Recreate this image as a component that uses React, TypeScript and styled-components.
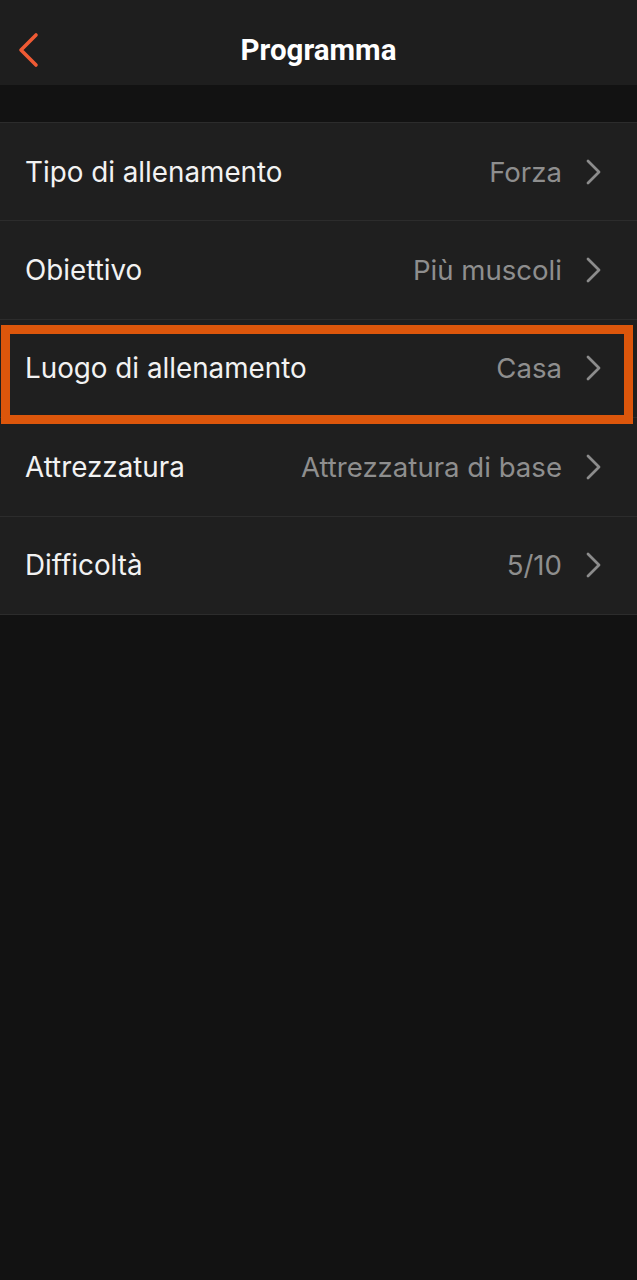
import styled, { createGlobalStyle } from 'styled-components';

const GlobalStyle = createGlobalStyle`
  html, body {
    margin: 0;
    padding: 0;
    background: #121212;
  }
  #root {
    min-height: 100vh;
  }
`;

const ROWS = [
  { label: 'Tipo di allenamento', value: 'Forza' },
  { label: 'Obiettivo', value: 'Più muscoli' },
  { label: 'Luogo di allenamento', value: 'Casa', highlighted: true },
  { label: 'Attrezzatura', value: 'Attrezzatura di base' },
  { label: 'Difficoltà', value: '5/10' },
];

export default function App() {
  return (
    <Screen>
      <GlobalStyle />
      <Header>
        <BackButton aria-label="Indietro">
          <svg width="22" height="36" viewBox="0 0 22 36" fill="none">
            <path
              d="M18 3 L3 18 L18 33"
              stroke="#ef5a34"
              strokeWidth="3.6"
              strokeLinecap="round"
              strokeLinejoin="round"
            />
          </svg>
        </BackButton>
        <Title>Programma</Title>
      </Header>

      <List>
        {ROWS.map((row) => (
          <Row key={row.label}>
            <Label>{row.label}</Label>
            <Value>{row.value}</Value>
            <Chevron width="15" height="26" viewBox="0 0 15 26" fill="none">
              <path
                d="M2 2 L13 13 L2 24"
                stroke="#8c8c8c"
                strokeWidth="2.8"
                strokeLinecap="round"
                strokeLinejoin="round"
              />
            </Chevron>
            {row.highlighted && <Highlight />}
          </Row>
        ))}
      </List>
    </Screen>
  );
}

const Screen = styled.div`
  display: flex;
  flex-direction: column;
  width: 100%;
  min-height: 100vh;
  background: #121212;
  font-family: Inter, 'Noto Sans', sans-serif;
`;

const Header = styled.header`
  position: relative;
  display: flex;
  align-items: center;
  justify-content: center;
  box-sizing: border-box;
  height: 85px;
  padding-top: 14px;
  background: #1e1e1e;
`;

const BackButton = styled.button`
  position: absolute;
  left: 18px;
  top: 32px;
  display: flex;
  padding: 0;
  border: none;
  background: transparent;
`;

const Title = styled.h1`
  margin: 0;
  color: #ffffff;
  font-family: Roboto, 'Liberation Sans', sans-serif;
  font-size: 29.5px;
  font-weight: 700;
`;

const List = styled.div`
  display: flex;
  flex-direction: column;
  margin-top: 37px;
  border-bottom: 1px solid #2c2c2c;
`;

const Row = styled.div`
  position: relative;
  display: flex;
  align-items: center;
  box-sizing: border-box;
  height: 98.4px;
  padding: 0 36px 0 25px;
  background: #1f1f1f;
  border-top: 1px solid #2c2c2c;
`;

const Label = styled.span`
  flex: 1;
  color: #f2f2f2;
  font-size: 27.8px;
  font-weight: 400;
`;

const Value = styled.span`
  color: #8e8e8e;
  font-size: 27.6px;
  font-weight: 400;
  margin-right: 24px;
`;

const Chevron = styled.svg`
  flex-shrink: 0;
`;

const Highlight = styled.div`
  position: absolute;
  z-index: 1;
  left: 1px;
  right: 4px;
  top: 5px;
  bottom: -7px;
  border: 9px solid #dc560b;
  pointer-events: none;
`;
